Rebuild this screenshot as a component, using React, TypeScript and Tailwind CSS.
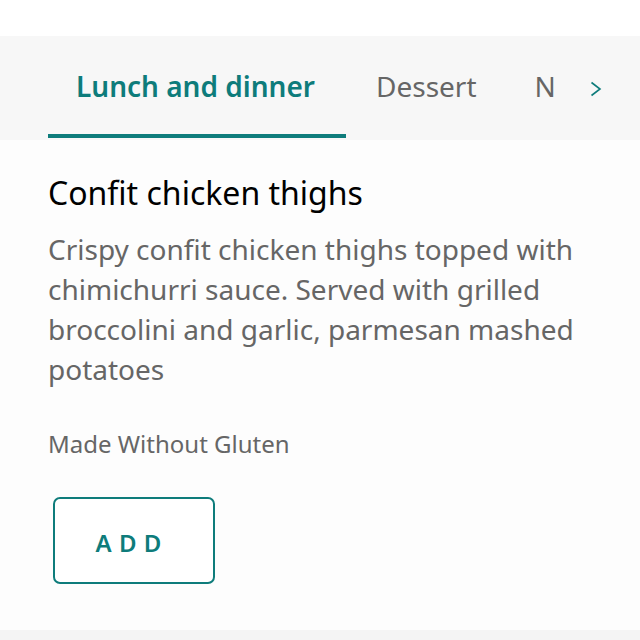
import React from "react";

export default function App() {
  const font = { fontFamily: '"Noto Sans", "Open Sans", sans-serif' };
  return (
    <div className="w-[640px] h-[640px] bg-white overflow-hidden" style={font}>
      <div className="h-[36px] bg-white" />
      <div className="h-[104px] bg-[#f7f7f7] flex items-stretch pl-[48px]">
        <div className="w-[507px] overflow-hidden flex items-stretch">
          <div className="flex items-stretch whitespace-nowrap">
            <div className="relative flex items-center pl-[28px] pr-[31px] pb-[4px] text-[28px] leading-[38px] font-semibold text-[#0e7c7b]">
              Lunch and dinner
              <div className="absolute left-0 right-0 bottom-[2px] h-[4px] bg-[#0e7c7b]" />
            </div>
            <div className="flex items-center pl-[30px] pr-[28px] pb-[4px] text-[28px] leading-[38px] text-[#666666]">Dessert</div>
            <div className="flex items-center px-[30px] pb-[4px] text-[28px] leading-[38px] text-[#666666]">Nibbles</div>
          </div>
        </div>
        <div className="w-[82px] flex items-center justify-center pt-[2px] text-[#0e7c7b]">
          <svg width="12" height="16" viewBox="0 0 12 16" fill="none" stroke="currentColor" strokeWidth="1.6">
            <path d="M1.5 1.5 L10 8 L1.5 14.5" />
          </svg>
        </div>
      </div>
      <div className="h-[490px] bg-[#fdfdfd] px-[48px] pt-[33px]">
        <div className="text-[32px] leading-[40px] text-black">Confit chicken thighs</div>
        <div className="mt-[16px] text-[28px] leading-[40px] text-[#666666]">
          Crispy confit chicken thighs topped with chimichurri sauce. Served with grilled broccolini and garlic, parmesan mashed potatoes
        </div>
        <div className="mt-[39px] text-[24px] leading-[32px] text-[#666666]">Made Without Gluten</div>
        <button className="mt-[37px] ml-[5px] w-[162px] h-[87px] rounded-[7px] border-2 border-[#0e7c7b] bg-white text-[#0e7c7b] text-[24px] leading-[32px] font-semibold tracking-[0.3em] flex items-center justify-center pt-[4px] pr-[4px]">
          ADD
        </button>
      </div>
      <div className="h-[10px] bg-[#f4f4f4]" />
    </div>
  );
}
